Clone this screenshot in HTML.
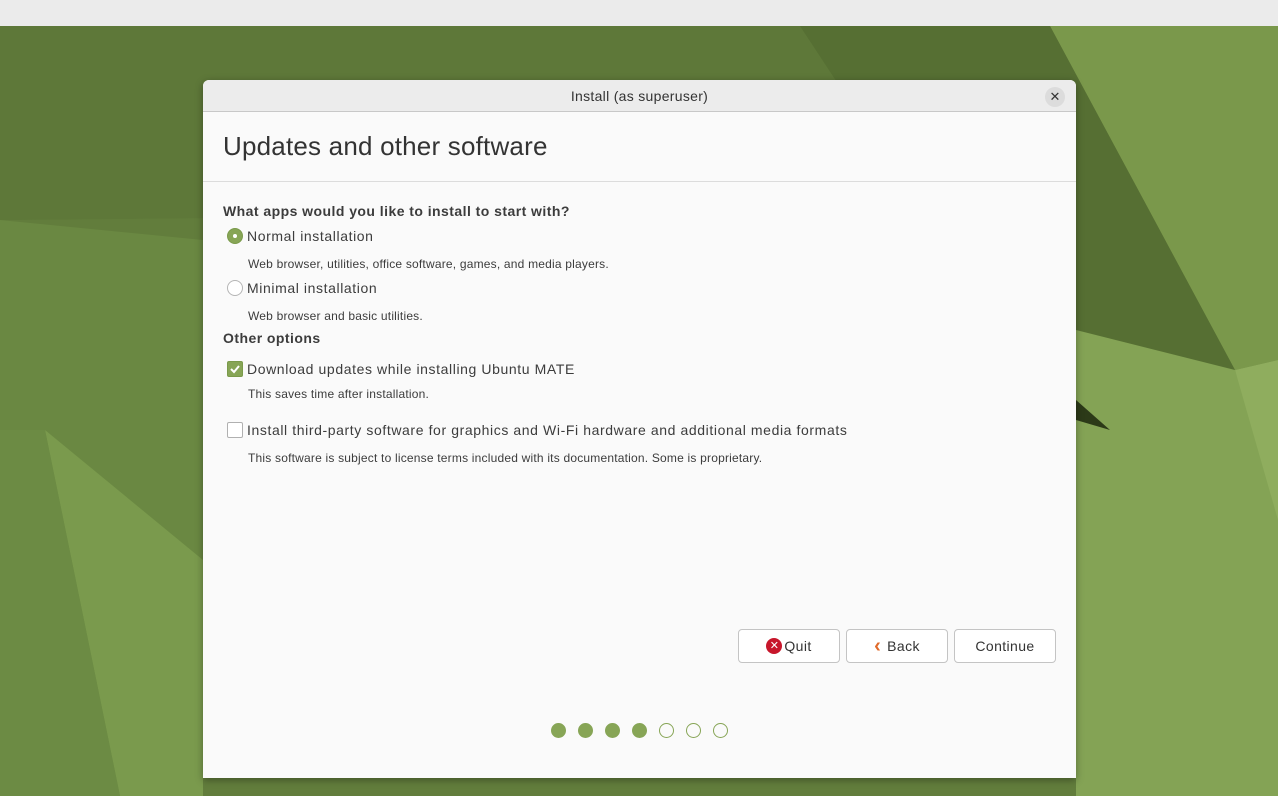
<!DOCTYPE html>
<html><head><meta charset="utf-8"><style>
*{margin:0;padding:0;box-sizing:border-box}
body{width:1278px;height:796px;overflow:hidden;position:relative;font-family:"Liberation Sans",sans-serif;color:#3c3c3c;background:#6d8a45}
#top{position:absolute;left:0;top:0;width:1278px;height:26px;background:#ebebeb}
#bg{position:absolute;left:0;top:26px}
#dlg{position:absolute;left:203px;top:80px;width:873px;height:698px;background:#fafafa;border-radius:6px 6px 0 0;box-shadow:0 2px 8px rgba(0,0,0,.35);overflow:hidden}
#tb{height:32px;background:#ececec;border-bottom:1px solid #c8c8c8;text-align:center;font-size:14px;line-height:32px;color:#333;letter-spacing:.3px}
#x{position:absolute;right:11px;top:7px;width:20px;height:20px;border-radius:10px;background:#dcdcdc;font-size:13px;line-height:20px;text-align:center;color:#333}
h1{font-weight:normal;font-size:26px;position:absolute;left:20px;top:51px;color:#333;letter-spacing:.2px}
#sep{position:absolute;left:0;top:101px;width:873px;height:1px;background:#dcdcdc}
.t{position:absolute;font-size:14px;white-space:nowrap;letter-spacing:.6px}
.b{font-weight:bold;letter-spacing:.45px}
.s{font-size:12px;letter-spacing:.2px}
.r{position:absolute;width:16px;height:16px;border-radius:8px;border:1px solid #b5b5b5;background:#fff}
.r.on{background:#87a556;border-color:#7a9a4a}
.r.on:after{content:"";position:absolute;left:5px;top:5px;width:4px;height:4px;border-radius:2px;background:#fff}
.c{position:absolute;width:16px;height:16px;border-radius:2px;border:1px solid #b0b0b0;background:#fff}
.c.on{background:#87a556;border-color:#7a9a4a}
.btn{position:absolute;top:549px;width:102px;height:34px;border:1px solid #c4c4c4;border-radius:4px;background:#fff;font-size:14px;color:#333;display:flex;align-items:center;justify-content:center;letter-spacing:.4px}
.d{position:absolute;top:643px;width:15px;height:15px;border-radius:8px;border:1px solid #87a556}
.d.f{background:#87a556}
</style></head><body>
<div id="top"></div>
<svg id="bg" width="1278" height="770" viewBox="0 26 1278 770">
<rect x="0" y="26" width="1278" height="770" fill="#627d3c"/>
<polygon points="0,26 800,26 1100,210 0,220" fill="#5e7839"/>
<polygon points="1050,26 1278,26 1278,360 1235,370" fill="#7a984b"/>
<polygon points="800,26 1050,26 1235,370 1000,330" fill="#566f33"/>
<polygon points="1076,330 1235,370 1278,500 1278,796 1076,796" fill="#84a355"/>
<polygon points="1235,370 1278,360 1278,520" fill="#8fad5e"/>
<polygon points="0,220 203,240 203,796 0,796" fill="#6a8842"/>
<polygon points="45,430 203,560 203,796 120,796" fill="#7a9a4d"/>
<polygon points="0,430 45,430 120,796 0,796" fill="#6c8b44"/>
<polygon points="1076,400 1110,430 1076,420" fill="#2c3a18"/>
</svg>
<div id="dlg">
<div id="tb">Install (as superuser)</div><div id="x">✕</div>
<h1>Updates and other software</h1>
<div id="sep"></div>
<div class="t b" style="left:20px;top:123px">What apps would you like to install to start with?</div>
<div class="r on" style="left:24px;top:148px"></div>
<div class="t" style="left:44px;top:148px">Normal installation</div>
<div class="t s" style="left:45px;top:177px">Web browser, utilities, office software, games, and media players.</div>
<div class="r" style="left:24px;top:200px"></div>
<div class="t" style="left:44px;top:200px">Minimal installation</div>
<div class="t s" style="left:45px;top:229px">Web browser and basic utilities.</div>
<div class="t b" style="left:20px;top:250px">Other options</div>
<div class="c on" style="left:24px;top:281px"><svg width="14" height="14" viewBox="0 0 14 14"><path d="M3 7l3 3 5-6" stroke="#fff" stroke-width="2" fill="none"/></svg></div>
<div class="t" style="left:44px;top:281px">Download updates while installing Ubuntu MATE</div>
<div class="t s" style="left:45px;top:307px">This saves time after installation.</div>
<div class="c" style="left:24px;top:342px"></div>
<div class="t" style="left:44px;top:342px">Install third-party software for graphics and Wi-Fi hardware and additional media formats</div>
<div class="t s" style="left:45px;top:371px">This software is subject to license terms included with its documentation. Some is proprietary.</div>
<div class="btn" style="left:535px"><span style="display:inline-block;width:16px;height:16px;border-radius:8px;background:#c7162b;color:#fff;font-size:11px;line-height:16px;text-align:center;margin-right:2px;letter-spacing:0">✕</span>Quit</div>
<div class="btn" style="left:643px"><span style="color:#e06a2a;font-weight:bold;font-size:20px;margin-right:6px;line-height:20px">&lsaquo;</span>Back</div>
<div class="btn" style="left:751px">Continue</div>
<div class="d f" style="left:348px"></div><div class="d f" style="left:375px"></div><div class="d f" style="left:402px"></div><div class="d f" style="left:429px"></div>
<div class="d" style="left:456px"></div><div class="d" style="left:483px"></div><div class="d" style="left:510px"></div>
</div>
</body></html>
